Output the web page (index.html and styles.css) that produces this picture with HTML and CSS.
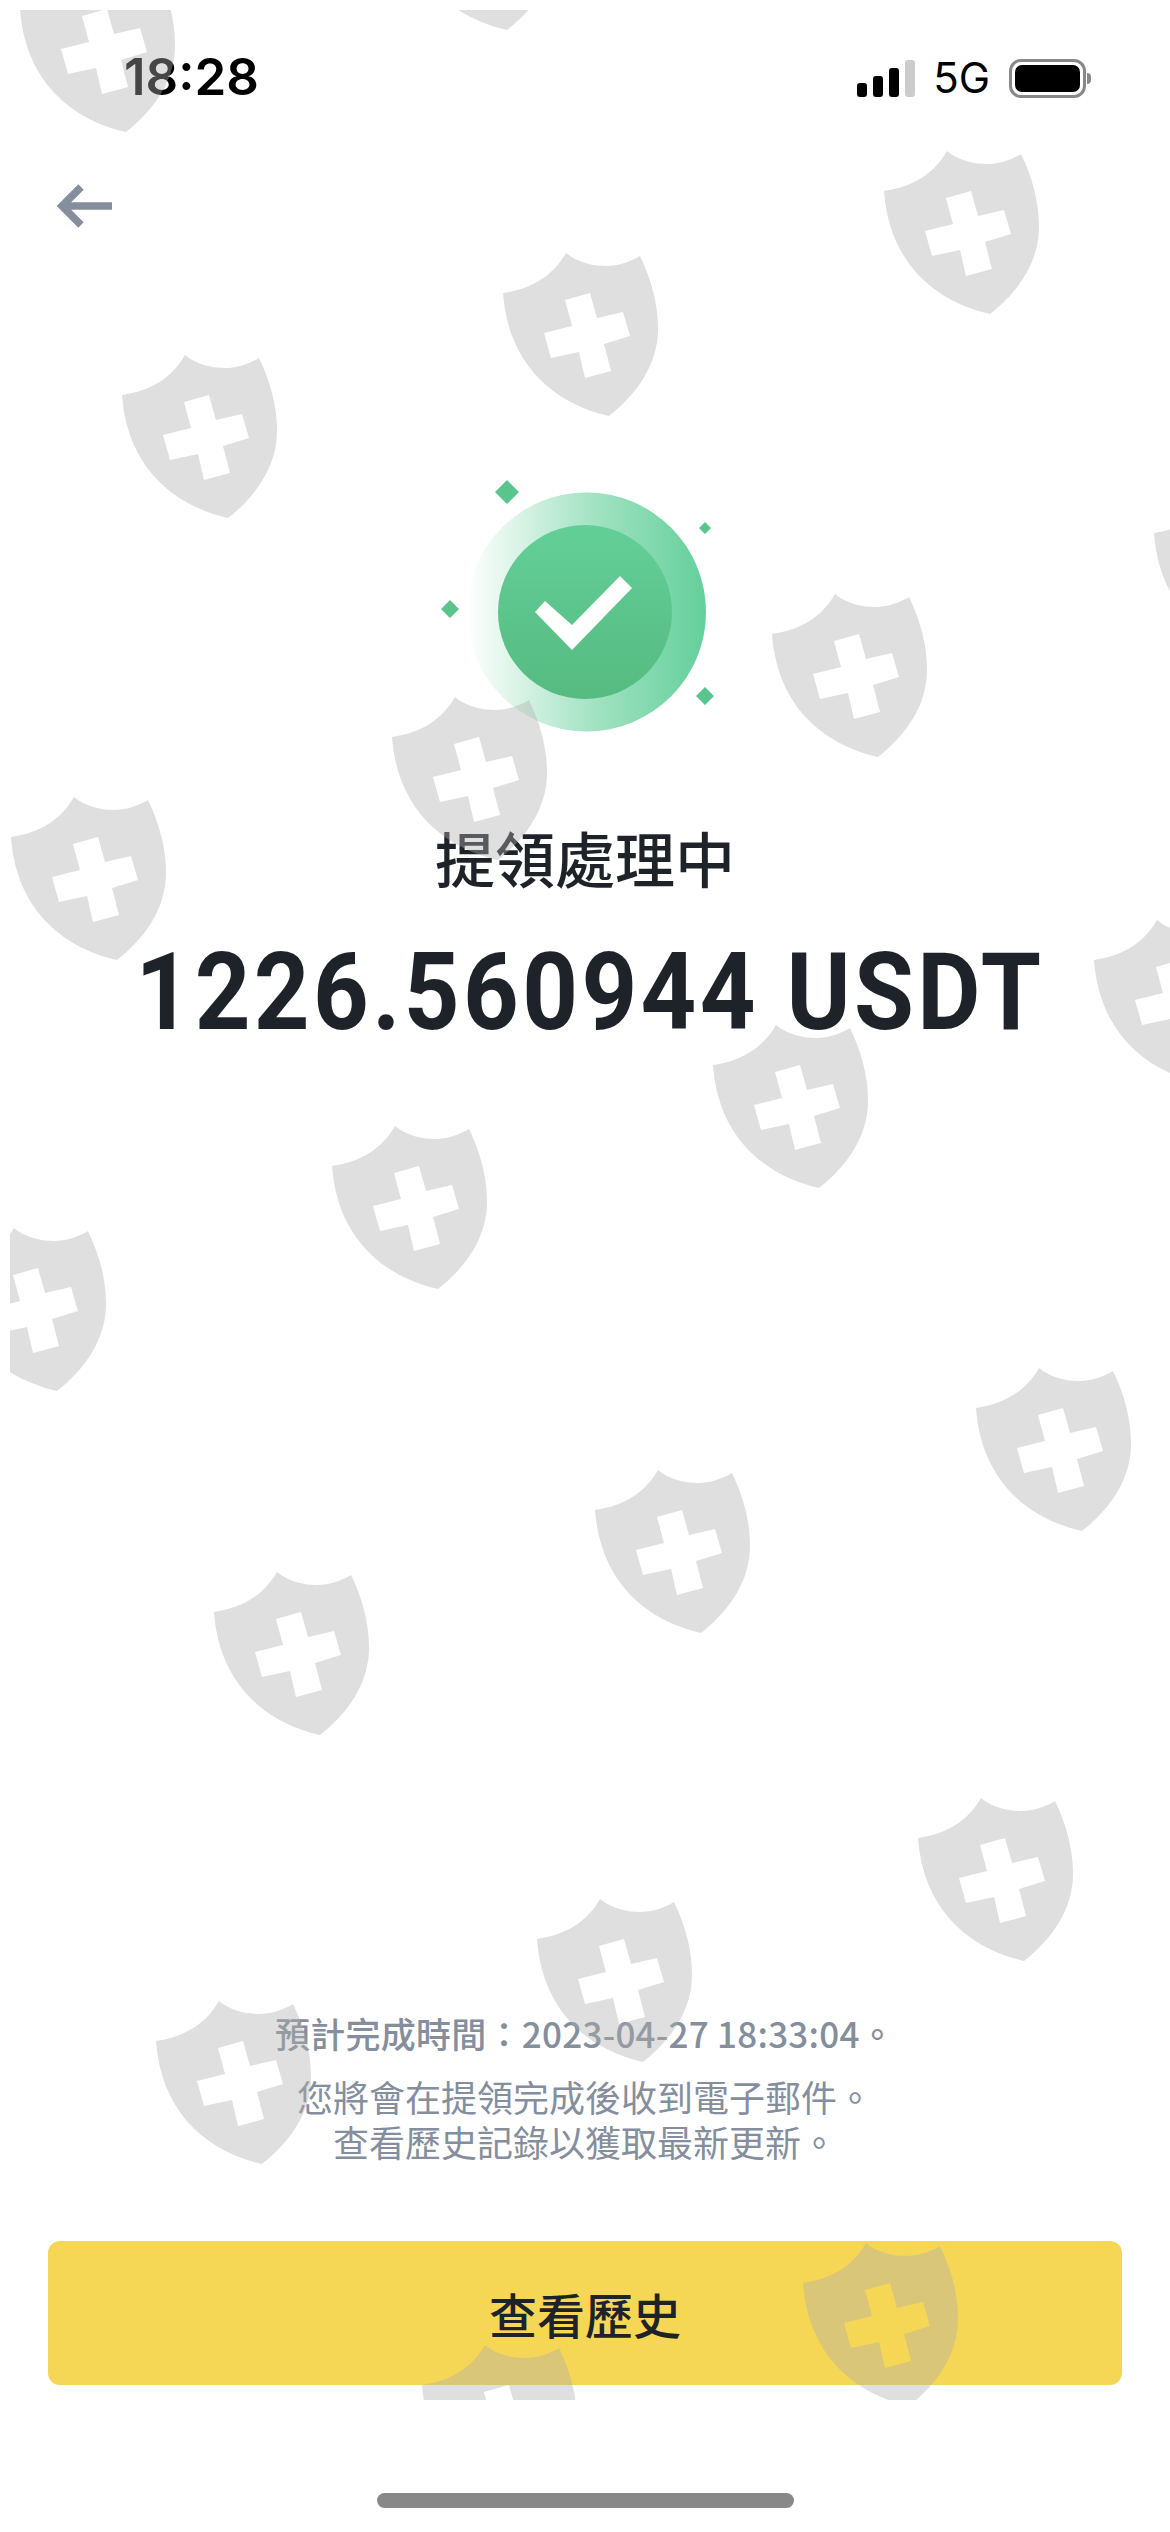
FILE: index.html
```html
<!DOCTYPE html>
<html lang="zh-Hant">
<head>
<meta charset="utf-8">
<title>提領處理中</title>
<link rel="stylesheet" href="styles.css">
</head>
<body>
<div class="page">
  <header class="status">
    <span class="time">18:28</span>
    <div class="status-right">
      <div class="signal"><i class="b1"></i><i class="b2"></i><i class="b3"></i><i class="b4"></i></div>
      <span class="net">5G</span>
      <div class="battery"><div class="battery-fill"></div></div>
      <div class="battery-nub"></div>
    </div>
  </header>
  <nav class="nav">
    <svg class="back" viewBox="0 0 56 44" width="56" height="44"><path d="M25 3 6 22l19 19M6 22h50" fill="none" stroke="#848e9c" stroke-width="7.5"/></svg>
  </nav>
  <main class="main">
    <svg class="success" viewBox="435 470 300 270" width="300" height="270">
      <defs>
        <linearGradient id="ring" x1="0" x2="1" y1="0" y2="0">
          <stop offset="0" stop-color="#5fce96" stop-opacity="0"/>
          <stop offset=".5" stop-color="#5fce96" stop-opacity=".55"/>
          <stop offset="1" stop-color="#63cf9b"/>
        </linearGradient>
        <linearGradient id="core" x1="0" x2="0" y1="0" y2="1">
          <stop offset="0" stop-color="#63cf98"/>
          <stop offset="1" stop-color="#55bb80"/>
        </linearGradient>
      </defs>
      <circle cx="586.5" cy="612" r="119.5" fill="url(#ring)"/>
      <circle cx="585" cy="612" r="87" fill="url(#core)"/>
      <path d="M535 612 545 601 572 625 620 576 632 588 572 650Z" fill="#fff"/>
      <path d="M507 480l12 12-12 12-12-12ZM705 522l6 6-6 6-6-6ZM450 600l9 9-9 9-9-9ZM705 687l9 9-9 9-9-9Z" fill="#5ac48d"/>
    </svg>
    <h1 class="title">提領處理中</h1>
    <div class="amount">1226.560944 USDT</div>
  </main>
  <section class="note">
    <p class="eta">預計完成時間：2023-04-27 18:33:04。</p>
    <p>您將會在提領完成後收到電子郵件。</p>
    <p>查看歷史記錄以獲取最新更新。</p>
  </section>
  <div class="actions"><button class="cta">查看歷史</button></div>
  <div class="home"></div>

  <svg class="watermark" viewBox="10 10 1160 2390" width="1160" height="2390">
    <defs>
      <path id="shield" fill-rule="evenodd" d="M1 40C22 37 48 28 64 0 76 10 92 13 104 13 116 13 128 9 138 3 150 28 156 52 156 76 156 112 134 142 107 163 50 150 6 110 1 40ZM63 47 88 40 95 65 121 59 128 83 102 91 109 118 83 125 77 99 49 105 42 80 70 73Z"/>
    </defs>
    <g class="marks">
      <use href="#shield" x="19" y="-31"/>
      <use href="#shield" x="400" y="-133"/>
      <use href="#shield" x="883" y="151"/>
      <use href="#shield" x="502" y="253"/>
      <use href="#shield" x="121" y="355"/>
      <use href="#shield" x="1153" y="493"/>
      <use href="#shield" x="771" y="594"/>
      <use href="#shield" x="391" y="697"/>
      <use href="#shield" x="10" y="797"/>
      <use href="#shield" x="1093" y="920"/>
      <use href="#shield" x="712" y="1025"/>
      <use href="#shield" x="331" y="1126"/>
      <use href="#shield" x="-50" y="1228"/>
      <use href="#shield" x="975" y="1368"/>
      <use href="#shield" x="594" y="1470"/>
      <use href="#shield" x="213" y="1572"/>
      <use href="#shield" x="917" y="1798"/>
      <use href="#shield" x="536" y="1899"/>
      <use href="#shield" x="155" y="2001"/>
      <use href="#shield" x="802" y="2243"/>
      <use href="#shield" x="421" y="2345"/>
    </g>
  </svg>
</div>
</body>
</html>
```
FILE: styles.css
```css
* { box-sizing: border-box; }
html, body { margin: 0; padding: 0; background: #fff; }
body { font-family: "Noto Sans CJK TC", "Noto Sans", sans-serif; }
.page { position: relative; width: 1170px; height: 2532px; overflow: hidden; display: flex; flex-direction: column; background: #fff; }

.status { height: 156px; flex: none; display: flex; justify-content: space-between; align-items: flex-start; padding: 49px 79px 0 124px; color: #000; }
.time { font-family: Inter, sans-serif; font-weight: 600; font-size: 51px; line-height: 56px; }
.status-right { display: flex; align-items: center; height: 48px; margin-top: 5px; }
.signal { display: flex; align-items: flex-end; gap: 6px; height: 38px; margin-right: 18px; }
.signal i { display: block; width: 10px; border-radius: 3px; background: #000; }
.signal .b1 { height: 14px; }
.signal .b2 { height: 21px; }
.signal .b3 { height: 29px; }
.signal .b4 { height: 37px; background: #ccc; }
.net { font-family: Inter, sans-serif; font-size: 42px; line-height: 48px; font-weight: 400; margin-right: 19px; }
.battery { width: 77px; height: 39px; border: 3px solid #888; border-radius: 12px; padding: 3px; }
.battery-fill { width: 100%; height: 100%; background: #000; border-radius: 7px; }
.battery-nub { width: 4px; height: 11px; margin-left: 1px; background: #888; border-radius: 0 4px 4px 0; }

.nav { height: 314px; flex: none; padding: 28px 0 0 56px; }
.back { display: block; }

.main { flex: 1; display: flex; flex-direction: column; align-items: center; }
.success { display: block; flex: none; }
.title { margin: 77px 0 0; font-size: 60px; line-height: 80px; font-weight: 500; color: #1e2329; }
.amount { margin: 35px 0 0 10px; font-family: Roboto, sans-serif; font-weight: 700; font-size: 108px; line-height: 120px; color: #1e2329; white-space: nowrap; transform: scaleX(.9); letter-spacing: 3.8px; }

.note { flex: none; text-align: center; color: #848e9c; font-size: 36px; line-height: 45px; margin-top: -2px; }
.note p { margin: 0; }
.note .eta { font-size: 35px; font-weight: 500; margin-bottom: 19px; letter-spacing: .25px; }

.actions { flex: none; padding: 75px 48px 0; margin-top: 2px; }
.cta { display: block; width: 100%; height: 144px; border: 0; border-radius: 12px; background: #f6d655; color: #1e2329; font: 500 48px/1 "Noto Sans CJK TC", sans-serif; }

.home { flex: none; width: 417px; height: 15px; margin: 108px auto 24px; border-radius: 8px; background: #888; }

.watermark { position: absolute; left: 10px; top: 10px; pointer-events: none; }
.marks { fill: rgba(175, 175, 175, .4); }
```
